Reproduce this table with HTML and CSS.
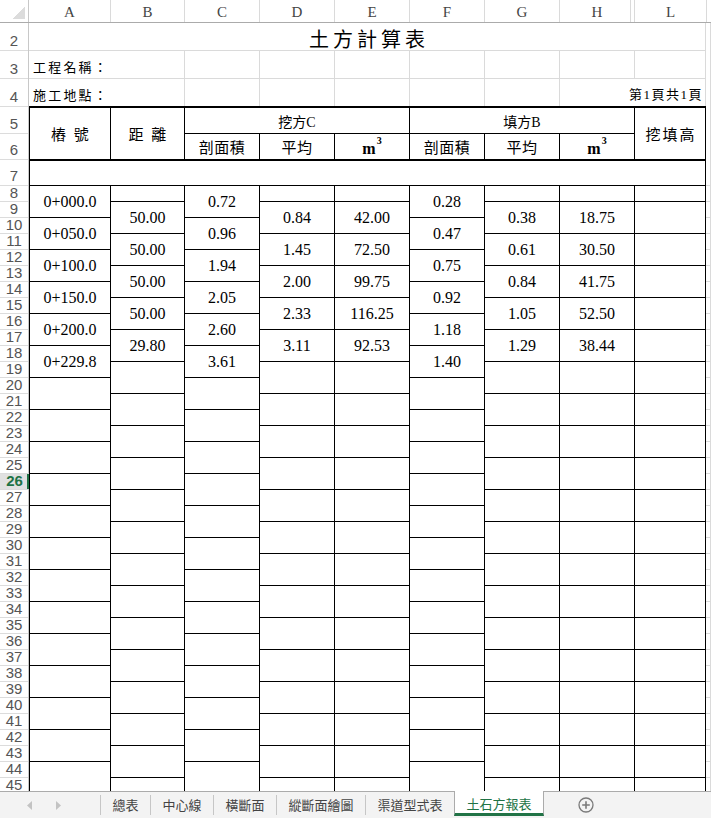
FILE: index.html
```html
<!DOCTYPE html>
<html lang="zh-Hant">
<head>
<meta charset="utf-8">
<title>土方計算表</title>
<link rel="stylesheet" href="styles.css">
</head>
<body>
<div class="app">
  <div class="sheet">
    <div class="colheads">
      <div class="corner"><div class="tri"></div></div>
      <div class="ch wA nb">A</div>
      <div class="ch wB">B</div>
      <div class="ch w75">C</div>
      <div class="ch w75">D</div>
      <div class="ch w75">E</div>
      <div class="ch w75">F</div>
      <div class="ch w75">G</div>
      <div class="ch w75 hid">H</div>
      <div class="ch wL">L</div>
      <div class="ch wR"></div>
    </div>
    <div class="body">
      <div class="rowheads">
        <div class="rn t h27 first">2</div>
        <div class="rn t h28">3</div>
        <div class="rn t h28">4</div>
        <div class="rn t h27">5</div>
        <div class="rn t h26">6</div>
        <div class="rn t h26">7</div>
        <div class="rn">8</div><div class="rn">9</div><div class="rn">10</div><div class="rn">11</div>
        <div class="rn">12</div><div class="rn">13</div><div class="rn">14</div><div class="rn">15</div>
        <div class="rn">16</div><div class="rn">17</div><div class="rn">18</div><div class="rn">19</div>
        <div class="rn">20</div><div class="rn">21</div><div class="rn">22</div><div class="rn">23</div>
        <div class="rn">24</div><div class="rn">25</div><div class="rn sel">26</div><div class="rn">27</div>
        <div class="rn">28</div><div class="rn">29</div><div class="rn">30</div><div class="rn">31</div>
        <div class="rn">32</div><div class="rn">33</div><div class="rn">34</div><div class="rn">35</div>
        <div class="rn">36</div><div class="rn">37</div><div class="rn">38</div><div class="rn">39</div>
        <div class="rn">40</div><div class="rn">41</div><div class="rn">42</div><div class="rn">43</div>
        <div class="rn">44</div><div class="rn">45</div>
      </div>
      <div class="cells">
        <!-- row 2 -->
        <div class="title s9">土方計算表</div>
        <!-- row 3 -->
        <div class="lbl s2">工程名稱：</div>
        <div class="g"></div><div class="g"></div><div class="g"></div><div class="g"></div><div class="g"></div><div class="g"></div><div class="g gr"></div>
        <!-- row 4 -->
        <div class="lbl s2">施工地點：</div>
        <div class="g"></div><div class="g"></div><div class="g"></div><div class="g"></div><div class="g"></div>
        <div class="g gr s2 pg">第1頁共1頁</div>
        <!-- row 5 -->
        <div class="c p tk hd hp">樁 號</div>
        <div class="c p tk hd hp">距 離</div>
        <div class="c s3 tk hd hs">挖方C</div>
        <div class="c s3 tk hd hs">填方B</div>
        <div class="c p tk r hd hp">挖填高</div>
        <!-- row 6 -->
        <div class="c hd h6">剖面積</div><div class="c hd h6">平均</div><div class="c m3">m<sup>3</sup></div>
        <div class="c hd h6">剖面積</div><div class="c hd h6">平均</div><div class="c m3">m<sup>3</sup></div>
        <!-- row 7 -->
        <div class="c s9 tk r"></div>
        <!-- row 8 -->
        <div class="c p">0+000.0</div><div class="c"></div><div class="c p">0.72</div><div class="c"></div><div class="c"></div><div class="c p">0.28</div><div class="c"></div><div class="c"></div><div class="c r"></div>
        <!-- row 9 -->
        <div class="c p">50.00</div><div class="c p">0.84</div><div class="c p">42.00</div><div class="c p">0.38</div><div class="c p">18.75</div><div class="c p r"></div>
        <!-- row 10 -->
        <div class="c p">0+050.0</div><div class="c p">0.96</div><div class="c p">0.47</div>
        <!-- row 11 -->
        <div class="c p">50.00</div><div class="c p">1.45</div><div class="c p">72.50</div><div class="c p">0.61</div><div class="c p">30.50</div><div class="c p r"></div>
        <!-- row 12 -->
        <div class="c p">0+100.0</div><div class="c p">1.94</div><div class="c p">0.75</div>
        <!-- row 13 -->
        <div class="c p">50.00</div><div class="c p">2.00</div><div class="c p">99.75</div><div class="c p">0.84</div><div class="c p">41.75</div><div class="c p r"></div>
        <!-- row 14 -->
        <div class="c p">0+150.0</div><div class="c p">2.05</div><div class="c p">0.92</div>
        <!-- row 15 -->
        <div class="c p">50.00</div><div class="c p">2.33</div><div class="c p">116.25</div><div class="c p">1.05</div><div class="c p">52.50</div><div class="c p r"></div>
        <!-- row 16 -->
        <div class="c p">0+200.0</div><div class="c p">2.60</div><div class="c p">1.18</div>
        <!-- row 17 -->
        <div class="c p">29.80</div><div class="c p">3.11</div><div class="c p">92.53</div><div class="c p">1.29</div><div class="c p">38.44</div><div class="c p r"></div>
        <!-- row 18 -->
        <div class="c p">0+229.8</div><div class="c p">3.61</div><div class="c p">1.40</div>
        <!-- rows 19-44 (empty) -->
        <div class="c p"></div><div class="c p"></div><div class="c p"></div><div class="c p"></div><div class="c p"></div><div class="c p r"></div>
        <div class="c p"></div><div class="c p"></div><div class="c p"></div>
        <div class="c p"></div><div class="c p"></div><div class="c p"></div><div class="c p"></div><div class="c p"></div><div class="c p r"></div>
        <div class="c p"></div><div class="c p"></div><div class="c p"></div>
        <div class="c p"></div><div class="c p"></div><div class="c p"></div><div class="c p"></div><div class="c p"></div><div class="c p r"></div>
        <div class="c p"></div><div class="c p"></div><div class="c p"></div>
        <div class="c p"></div><div class="c p"></div><div class="c p"></div><div class="c p"></div><div class="c p"></div><div class="c p r"></div>
        <div class="c p"></div><div class="c p"></div><div class="c p"></div>
        <div class="c p"></div><div class="c p"></div><div class="c p"></div><div class="c p"></div><div class="c p"></div><div class="c p r"></div>
        <div class="c p"></div><div class="c p"></div><div class="c p"></div>
        <div class="c p"></div><div class="c p"></div><div class="c p"></div><div class="c p"></div><div class="c p"></div><div class="c p r"></div>
        <div class="c p"></div><div class="c p"></div><div class="c p"></div>
        <div class="c p"></div><div class="c p"></div><div class="c p"></div><div class="c p"></div><div class="c p"></div><div class="c p r"></div>
        <div class="c p"></div><div class="c p"></div><div class="c p"></div>
        <div class="c p"></div><div class="c p"></div><div class="c p"></div><div class="c p"></div><div class="c p"></div><div class="c p r"></div>
        <div class="c p"></div><div class="c p"></div><div class="c p"></div>
        <div class="c p"></div><div class="c p"></div><div class="c p"></div><div class="c p"></div><div class="c p"></div><div class="c p r"></div>
        <div class="c p"></div><div class="c p"></div><div class="c p"></div>
        <div class="c p"></div><div class="c p"></div><div class="c p"></div><div class="c p"></div><div class="c p"></div><div class="c p r"></div>
        <div class="c p"></div><div class="c p"></div><div class="c p"></div>
        <div class="c p"></div><div class="c p"></div><div class="c p"></div><div class="c p"></div><div class="c p"></div><div class="c p r"></div>
        <div class="c p"></div><div class="c p"></div><div class="c p"></div>
        <div class="c p"></div><div class="c p"></div><div class="c p"></div><div class="c p"></div><div class="c p"></div><div class="c p r"></div>
        <div class="c p"></div><div class="c p"></div><div class="c p"></div>
        <div class="c p"></div><div class="c p"></div><div class="c p"></div><div class="c p"></div><div class="c p"></div><div class="c p r"></div>
        <div class="c p"></div><div class="c p"></div><div class="c p"></div>
        <!-- row 45 -->
        <div class="c"></div><div class="c"></div><div class="c"></div><div class="c"></div><div class="c"></div><div class="c r"></div>
      </div>
      <div class="rest"></div>
    </div>
  </div>
  <div class="tabs">
    <div class="nav">
      <svg class="arr" width="6" height="9" viewBox="0 0 6 9"><polygon points="5,0 0,4.5 5,9" fill="#c3c3c3"/></svg>
      <svg class="arr" width="6" height="9" viewBox="0 0 6 9"><polygon points="1,0 6,4.5 1,9" fill="#c3c3c3"/></svg>
    </div>
    <span class="sep"></span>
    <div class="tab">總表</div>
    <span class="sep"></span>
    <div class="tab">中心線</div>
    <span class="sep"></span>
    <div class="tab">橫斷面</div>
    <span class="sep"></span>
    <div class="tab">縱斷面繪圖</div>
    <span class="sep"></span>
    <div class="tab">渠道型式表</div>
    <div class="tab on">土石方報表</div>
    <svg class="add" width="16" height="16" viewBox="0 0 16 16">
      <circle cx="8" cy="8" r="7" fill="none" stroke="#7a7a7a" stroke-width="1.3"/>
      <path d="M8 4.2V11.8M4.2 8H11.8" stroke="#7a7a7a" stroke-width="1.6"/>
    </svg>
  </div>
</div>
</body>
</html>
```

FILE: styles.css
```css
* { box-sizing: border-box; }
html, body { margin: 0; padding: 0; }
body {
  width: 711px;
  height: 818px;
  overflow: hidden;
  background: #fff;
  font-family: "Liberation Serif", "Noto Sans CJK TC", serif;
  color: #000;
}
.app { width: 711px; height: 818px; display: flex; flex-direction: column; }
.sheet { height: 791px; flex: none; overflow: hidden; }

/* column headers */
.colheads { display: flex; height: 23px; border-bottom: 1px solid #ababab; }
.corner {
  width: 29px; flex: none;
  border-right: 1px solid #c8c8c8;
  display: flex; align-items: flex-end; justify-content: flex-end;
  padding: 0 3px 3px 0;
}
.tri { width: 13px; height: 13px; background: linear-gradient(135deg, transparent 50%, #dcdcdc 50%); }
.ch {
  flex: none;
  display: flex; align-items: center; justify-content: center;
  border-left: 1px solid #dadada;
  font: 15px "Liberation Serif", serif;
  color: #444;
  padding-top: 2px;
}
.ch.nb { border-left: 0; }
.wA { width: 81px; }
.wB { width: 74px; }
.w75 { width: 75px; }
.wL { width: 72px; }
.wR { flex: 1; }
.hid { box-shadow: inset -3px 0 0 #fff, inset -4px 0 0 #dadada; }

/* body */
.body { display: flex; }
.rowheads {
  width: 29px; flex: none;
  display: flex; flex-direction: column;
  border-right: 1px solid #c8c8c8;
}
.rn {
  height: 16px; flex: none;
  border-top: 1px solid #dcdcdc;
  display: flex; align-items: flex-end; justify-content: center;
  font: 15px/15px "Liberation Sans", sans-serif;
  color: #555;
  padding-bottom: 1px;
}
.rn.first { border-top: 0; }
.rn.t { padding-bottom: 2px; }
.h26 { height: 26px; }
.h27 { height: 27px; }
.h28 { height: 28px; }
.rn.sel {
  background: #e1e1e1;
  color: #217346;
  font-weight: bold;
  margin-right: -1px;
  box-shadow: inset -2px 0 0 #217346;
}

.cells {
  flex: none;
  display: grid;
  grid-template-columns: 81px 74px repeat(6, 75px) 72px;
  grid-template-rows: 27px 28px 28px 27px 26px 26px repeat(38, 16px);
}
.rest {
  flex: 1;
  border-right: 1px solid #dadada;
  background:
    linear-gradient(#fff, #fff) 0 0 / 100% 162px no-repeat,
    linear-gradient(#dadada 1px, transparent 1px) 0 162px / 100% 16px repeat-y;
}

.s2 { grid-column: span 2; }
.s3 { grid-column: span 3; }
.s9 { grid-column: span 9; }

/* top (unbordered) rows */
.title {
  display: flex; align-items: flex-end; justify-content: center;
  font: 20px/20px "Noto Sans CJK TC", sans-serif;
  letter-spacing: 4px;
  padding-left: 4px;
  padding-bottom: 1px;
  border-right: 1px solid #dadada;
}
.lbl {
  display: flex; align-items: flex-end;
  border-top: 1px solid #dadada;
  font: 13px/16px "Noto Sans CJK TC", sans-serif;
  letter-spacing: 2.2px;
  padding: 0 0 3px 4px;
}
.g { border-left: 1px solid #dadada; border-top: 1px solid #dadada; }
.gr { border-right: 1px solid #dadada; }
.pg {
  display: flex; align-items: flex-end; justify-content: flex-end;
  font: 13px/16px "Liberation Serif", "Noto Sans CJK TC", serif;
  letter-spacing: 1.5px;
  padding: 0 2px 3px 0;
}

/* bordered table */
.c {
  border-left: 1px solid #000;
  border-top: 1px solid #000;
  display: flex; align-items: center; justify-content: center;
  font: 16px/16px "Liberation Serif", serif;
}
.p { grid-row: span 2; }
.r { border-right: 1px solid #000; }
.tk { border-top-width: 2px; }
.hd {
  font-family: "Liberation Serif", "Noto Sans CJK TC", sans-serif;
  font-size: 15px;
  letter-spacing: 0.5px;
}
.hp { padding-top: 2px; letter-spacing: 2px; padding-left: 2px; }
.hs { font-size: 14px; letter-spacing: 0; padding-top: 4px; }
.h6 { padding-top: 3px; }
.m3 { font-weight: bold; padding-top: 4px; }
.m3 sup {
  font-size: 10px;
  line-height: 10px;
  align-self: flex-start;
  margin-top: -2px;
  margin-left: 1px;
}

/* sheet tabs */
.tabs {
  height: 27px; flex: none;
  display: flex; align-items: stretch;
  background: #f3f3f3;
  border-top: 1px solid #ababab;
  font: 13px "Noto Sans CJK TC", sans-serif;
  color: #444;
}
.nav { width: 100px; flex: none; display: flex; align-items: center; gap: 22px; padding-left: 27px; }
.sep { width: 1px; flex: none; background: #c6c6c6; margin: 3px 0 3px; }
.tab { display: flex; align-items: center; padding: 0 11.5px 1px; flex: none; }
.tab.on {
  background: #fff;
  color: #217346;
  border-left: 1px solid #ababab;
  border-right: 1px solid #ababab;
  border-bottom: 3px solid #217346;
  margin: -1px 0 2px;
  padding-top: 3px;
}
.add { align-self: center; margin-left: 34px; flex: none; }
```
